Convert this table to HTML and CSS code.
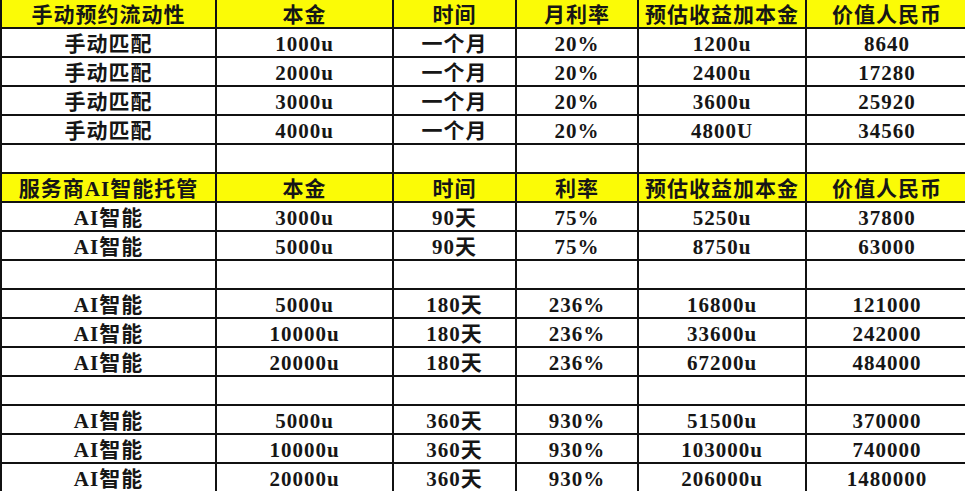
FILE: index.html
```html
<!DOCTYPE html>
<html lang="zh">
<head>
<meta charset="utf-8">
<link rel="stylesheet" href="styles.css">
<title>收益表</title>
</head>
<body>
<table class="sheet">
  <colgroup>
    <col class="c1"><col class="c2"><col class="c3"><col class="c4"><col class="c5"><col class="c6">
  </colgroup>
  <tbody>
    <tr class="head first"><td>手动预约流动性</td><td>本金</td><td>时间</td><td>月利率</td><td>预估收益加本金</td><td>价值人民币</td></tr>
    <tr><td>手动匹配</td><td>1000u</td><td>一个月</td><td>20%</td><td>1200u</td><td>8640</td></tr>
    <tr><td>手动匹配</td><td>2000u</td><td>一个月</td><td>20%</td><td>2400u</td><td>17280</td></tr>
    <tr><td>手动匹配</td><td>3000u</td><td>一个月</td><td>20%</td><td>3600u</td><td>25920</td></tr>
    <tr><td>手动匹配</td><td>4000u</td><td>一个月</td><td>20%</td><td>4800U</td><td>34560</td></tr>
    <tr class="empty"><td></td><td></td><td></td><td></td><td></td><td></td></tr>
    <tr class="head"><td>服务商AI智能托管</td><td>本金</td><td>时间</td><td>利率</td><td>预估收益加本金</td><td>价值人民币</td></tr>
    <tr><td>AI智能</td><td>3000u</td><td>90天</td><td>75%</td><td>5250u</td><td>37800</td></tr>
    <tr><td>AI智能</td><td>5000u</td><td>90天</td><td>75%</td><td>8750u</td><td>63000</td></tr>
    <tr class="empty"><td></td><td></td><td></td><td></td><td></td><td></td></tr>
    <tr><td>AI智能</td><td>5000u</td><td>180天</td><td>236%</td><td>16800u</td><td>121000</td></tr>
    <tr><td>AI智能</td><td>10000u</td><td>180天</td><td>236%</td><td>33600u</td><td>242000</td></tr>
    <tr><td>AI智能</td><td>20000u</td><td>180天</td><td>236%</td><td>67200u</td><td>484000</td></tr>
    <tr class="empty"><td></td><td></td><td></td><td></td><td></td><td></td></tr>
    <tr><td>AI智能</td><td>5000u</td><td>360天</td><td>930%</td><td>51500u</td><td>370000</td></tr>
    <tr><td>AI智能</td><td>10000u</td><td>360天</td><td>930%</td><td>103000u</td><td>740000</td></tr>
    <tr><td>AI智能</td><td>20000u</td><td>360天</td><td>930%</td><td>206000u</td><td>1480000</td></tr>
  </tbody>
</table>
</body>
</html>
```

FILE: styles.css
```css
html, body {
  margin: 0;
  padding: 0;
  background: #ffffff;
  overflow: hidden;
}

.sheet {
  border-collapse: collapse;
  table-layout: fixed;
  width: 966px;
  margin-top: 0;
  font-family: "Liberation Serif", "Noto Sans CJK SC", serif;
  font-weight: 700;
  font-size: 21px;
  letter-spacing: 1px;
  color: #161616;
}

.c1 { width: 215px; }
.c2 { width: 177px; }
.c3 { width: 123px; }
.c4 { width: 122px; }
.c5 { width: 168px; }
.c6 { width: 161px; }

.sheet td {
  height: 24px;
  padding: 3px 0 0 0;
  text-align: center;
  vertical-align: middle;
  border: 2px solid #111111;
  line-height: 24px;
  white-space: nowrap;
  overflow: hidden;
}

.sheet tr td:last-child {
  border-right: none;
}

.sheet tr.first td {
  border-top: none;
}

.head td {
  background: #fbfb06;
}
```
